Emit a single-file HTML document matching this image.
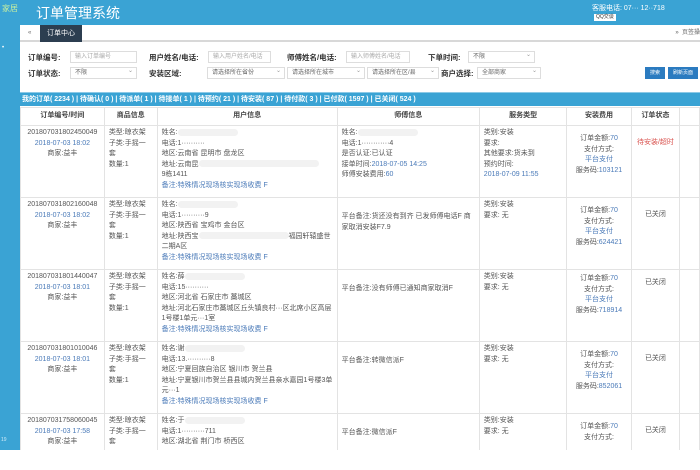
<!DOCTYPE html>
<html><head><meta charset="utf-8"><style>
*{margin:0;padding:0;box-sizing:border-box}
html,body{width:700px;height:470px;overflow:hidden}
body{background:#fff;font-family:"Liberation Sans","Noto Sans CJK SC",sans-serif;font-size:8px;color:#444;position:relative}
.hdr{position:absolute;left:0;top:0;width:700px;height:25px;background:#3aa3d4}
.side{position:absolute;left:0;top:25px;width:20px;height:425px;background:#3aa3d4}
.main{position:absolute;left:20px;top:25px;width:680px;height:425px;background:#fff}
.tabs{height:17px;border-bottom:2px solid #d8d8d8;position:relative;background:#fff}
.tab{position:absolute;left:20px;top:0;height:17px;width:42px;background:#2c3e50;color:#fff;font-size:7px;line-height:17px;text-align:center}
.f{position:absolute;font-size:7.5px;font-weight:bold;color:#333}
.in{position:absolute;height:12px;border:1px solid #ddd;font-size:6px;color:#aaa;line-height:10px;padding-left:4px;background:#fff}
.sel::after{content:"⌄";position:absolute;right:3px;top:-2px;color:#999}
.btn{position:absolute;height:12px;background:#2b7bc0;color:#fff;font-size:5px;line-height:12px;text-align:center}
.bar{position:absolute;left:20px;top:92px;width:680px;height:14px;background:#3aa3d4;color:#fff;font-weight:bold;font-size:7px;line-height:14px;padding-left:2px;border-top:1px solid #8cc9e6}
.clip{position:absolute;left:20px;top:107px;width:680px;height:343px;overflow:hidden}
table{border-collapse:collapse;table-layout:fixed;font-size:7px;line-height:10.6px}
td,th{border:1px solid #e3e3e3;vertical-align:top;padding:2px 4px}
th{height:18px;font-weight:bold;color:#444;text-align:center;vertical-align:middle}
td{height:72px;color:#555}
.c{text-align:center}.b{color:#4a7ab8}.r{color:#d9534f}
.blur{display:inline-block;width:60px;height:7px;background:#f2f2f2;border-radius:4px;vertical-align:middle}
</style></head><body>
<div class="hdr">
<div style="position:absolute;left:2px;top:3px;color:#c9f0a0;font-size:8px">家居</div>
<div style="position:absolute;left:36px;top:3px;color:#fff;font-size:14px">订单管理系统</div>
<div style="position:absolute;left:592px;top:3px;color:#fff;font-size:7px">客服电话: 07··· 12··718</div>
<div style="position:absolute;left:594px;top:14px;background:#fff;color:#333;font-size:5px;padding:0 2px;height:7px;line-height:7px">QQ交谈</div>
</div>
<div class="side"><div style="position:absolute;left:2px;top:20px;color:#fff;font-size:6px">•</div><div style="position:absolute;left:1px;top:412px;color:#cfeaf7;font-size:5px">19</div></div>
<div class="main">
<div class="tabs"><span style="position:absolute;left:8px;top:0;line-height:17px;font-size:6px;color:#666">«</span><div class="tab">订单中心</div>
<span style="position:absolute;right:0;top:0;line-height:17px;font-size:6px;color:#666">»&nbsp; 页签操</span></div>
</div>
<div class="f" style="left:28px;top:52px">订单编号:</div><div class="in" style="left:70px;top:51px;width:67px">输入订单编号</div>
<div class="f" style="left:149px;top:52px">用户姓名/电话:</div><div class="in" style="left:208px;top:51px;width:63px">输入用户姓名/电话</div>
<div class="f" style="left:287px;top:52px">师傅姓名/电话:</div><div class="in" style="left:346px;top:51px;width:64px">输入师傅姓名/电话</div>
<div class="f" style="left:428px;top:52px">下单时间:</div><div class="in sel" style="left:468px;top:51px;width:67px;color:#666">不限</div>
<div class="f" style="left:28px;top:68px">订单状态:</div><div class="in sel" style="left:70px;top:67px;width:67px;color:#666">不限</div>
<div class="f" style="left:149px;top:68px">安装区域:</div><div class="in sel" style="left:207px;top:67px;width:78px;color:#666">请选择所在省份</div>
<div class="in sel" style="left:287px;top:67px;width:78px;color:#666">请选择所在城市</div>
<div class="in sel" style="left:367px;top:67px;width:72px;color:#666">请选择所在区/县</div>
<div class="f" style="left:441px;top:68px">商户选择:</div><div class="in sel" style="left:477px;top:67px;width:64px;color:#666">全部商家</div>
<div class="btn" style="left:645px;top:67px;width:20px">搜索</div>
<div class="btn" style="left:668px;top:67px;width:30px">刷新页面</div>
<div class="bar">我的订单( 2234 ) | 待确认( 0 ) | 待派单( 1 ) | 待接单( 1 ) | 待预约( 21 ) | 待安装( 87 ) | 待付款( 3 ) | 已付款( 1597 ) | 已关闭( 524 )</div>
<div class="clip">
<table>
<colgroup><col style="width:84px"><col style="width:54px"><col style="width:182px"><col style="width:145px"><col style="width:90px"><col style="width:65px"><col style="width:50px"><col style="width:20px"></colgroup>
<tr><th>订单编号/时间</th><th>商品信息</th><th>用户信息</th><th>师傅信息</th><th>服务类型</th><th>安装费用</th><th>订单状态</th><th></th></tr>
<tr><td class="c">201807031802450049<br><span class="b">2018-07-03 18:02</span><br>商家:益丰</td><td>类型:晾衣架<br>子类:手摇一套<br>数量:1</td><td>姓名:<span class="blur"></span><br>电话:1··········<br>地区:云南省 昆明市 盘龙区<br>地址:云南昆<span class="blur" style="width:120px"></span><br>9栋1411<br><span class="b">备注:特殊情况现场核实现场收费 F</span></td><td>姓名:<span class="blur"></span><br>电话:1············4<br>是否认证:已认证<br>接单时间:<span class="b">2018-07-05 14:25</span><br>师傅安装费用:<span class="b">60</span></td><td>类别:安装<br>要求:<br>其他要求:货未到<br>预约时间:<br><span class="b">2018-07-09 11:55</span></td><td class="c" style="padding-top:8px">订单金额:<span class="b">70</span><br>支付方式:<br><span class="b">平台支付</span><br>服务码:<span class="b">103121</span></td><td class="c r" style="padding-top:12px">待安装/超时</td><td></td></tr>
<tr><td class="c">201807031802160048<br><span class="b">2018-07-03 18:02</span><br>商家:益丰</td><td>类型:晾衣架<br>子类:手摇一套<br>数量:1</td><td>姓名:<span class="blur"></span><br>电话:1··········9<br>地区:陕西省 宝鸡市 金台区<br>地址:陕西宝<span class="blur" style="width:90px"></span>福园轩辕盛世<br>二期A区<br><span class="b">备注:特殊情况现场核实现场收费 F</span></td><td style="padding-top:14px">平台备注:货还没有到齐 已发师傅电话F 商家取消安装F7.9</td><td>类别:安装<br>要求: 无</td><td class="c" style="padding-top:8px">订单金额:<span class="b">70</span><br>支付方式:<br><span class="b">平台支付</span><br>服务码:<span class="b">624421</span></td><td class="c" style="padding-top:12px">已关闭</td><td></td></tr>
<tr><td class="c">201807031801440047<br><span class="b">2018-07-03 18:01</span><br>商家:益丰</td><td>类型:晾衣架<br>子类:手摇一套<br>数量:1</td><td>姓名:薛<span class="blur"></span><br>电话:15··········<br>地区:河北省 石家庄市 藁城区<br>地址:河北石家庄市藁城区丘头镇良村···区北席小区高层1号楼1单元···1室<br><span class="b">备注:特殊情况现场核实现场收费 F</span></td><td style="padding-top:14px">平台备注:没有师傅已通知商家取消F</td><td>类别:安装<br>要求: 无</td><td class="c" style="padding-top:4px">订单金额:<span class="b">70</span><br>支付方式:<br><span class="b">平台支付</span><br>服务码:<span class="b">718914</span></td><td class="c" style="padding-top:8px">已关闭</td><td></td></tr>
<tr><td class="c">201807031801010046<br><span class="b">2018-07-03 18:01</span><br>商家:益丰</td><td>类型:晾衣架<br>子类:手摇一套<br>数量:1</td><td>姓名:谢<span class="blur"></span><br>电话:13.··········8<br>地区:宁夏回族自治区 银川市 贺兰县<br>地址:宁夏银川市贺兰县县城内贺兰县亲水嘉园1号楼3单元···1<br><span class="b">备注:特殊情况现场核实现场收费 F</span></td><td style="padding-top:14px">平台备注:转微信派F</td><td>类别:安装<br>要求: 无</td><td class="c" style="padding-top:8px">订单金额:<span class="b">70</span><br>支付方式:<br><span class="b">平台支付</span><br>服务码:<span class="b">852061</span></td><td class="c" style="padding-top:12px">已关闭</td><td></td></tr>
<tr><td class="c">201807031758060045<br><span class="b">2018-07-03 17:58</span><br>商家:益丰</td><td>类型:晾衣架<br>子类:手摇一套</td><td>姓名:于<span class="blur"></span><br>电话:1··········711<br>地区:湖北省 荆门市 桥西区</td><td style="padding-top:14px">平台备注:微信派F</td><td>类别:安装<br>要求: 无</td><td class="c" style="padding-top:8px">订单金额:<span class="b">70</span><br>支付方式:</td><td class="c" style="padding-top:12px">已关闭</td><td></td></tr>
</table>
</div>
</body></html>
